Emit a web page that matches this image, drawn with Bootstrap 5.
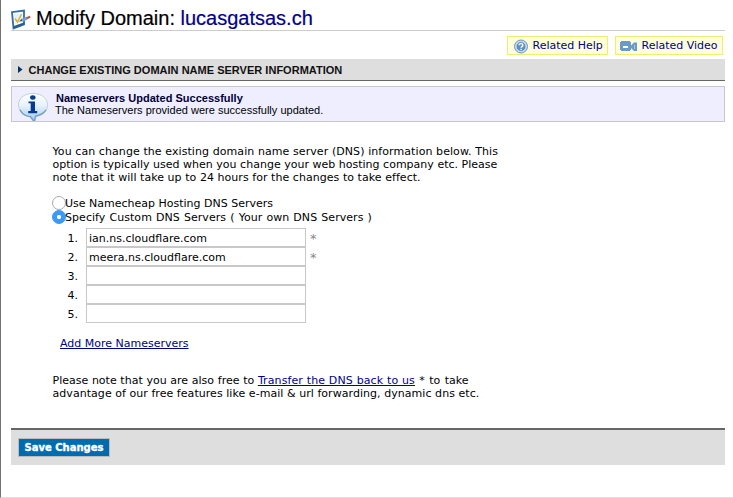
<!DOCTYPE html>
<html lang="en">
<head>
<meta charset="utf-8">
<meta name="viewport" content="width=device-width, initial-scale=1">
<title>Modify Domain</title>
<link href="https://cdn.jsdelivr.net/npm/bootstrap@5.3.0/dist/css/bootstrap.min.css" rel="stylesheet">
<style>
body{font-family:"DejaVu Sans",Verdana,sans-serif;font-size:11px;line-height:13px;color:#000;background:#fff}
.page{height:498px;border-left:1px solid #737373;border-bottom:1px solid #ddd;padding:0 8px 0 10px}
.arial{font-family:"Liberation Sans",Arial,sans-serif}
a{color:#00008b}
.title-bar{height:31px;border-bottom:1px solid #ccc;padding-top:6px}
.title-bar h1{font-size:20px;line-height:24px;-webkit-text-stroke:.2px}
.title-bar h1 span{color:#00008b}
.title-icon{margin:3px 5px 0 0}
.tools{height:28px;padding:5px 2px 0;gap:7px}
.tool{height:19px;border:1px solid #eeee70;background:#ffffdc;color:#00008b;white-space:nowrap}
.section-bar{height:22px;background:#dedede;border-bottom:1px solid #666}
.section-bar h2{font-size:11px;line-height:21px;padding-top:1px;color:#111;letter-spacing:.015px}
.notice{height:36px;margin-top:5px;border:1px solid #c8c8cc;background:#eeeeff;font-size:11px;line-height:12px}
.notice strong{color:#000033}
.content-area{padding:23px 0 0 41.500px;height:306px}
.option{height:14px;line-height:16px}
.option .form-check-input{width:14px;height:14px;min-height:0;margin:0 -1px 0 -.5px;border-color:#aaa;background-size:auto}
.option .form-check-input:checked{background-color:#3b99fc;border-color:#3b99fc;background-image:radial-gradient(circle,#fff 0 1.700px,transparent 2.500px)}
.ns-list{margin:4px 0 0 -.5px}
.ns-row{height:19px}
.ns-row .num{width:34px;padding-left:15.500px;line-height:21px}
.ns-row .form-control{width:220px;height:19px;min-height:0;padding:1px 2px 0;border:1px solid #c8c8c8;border-radius:0;font-size:11px;line-height:16px;color:#000}
.ns-row .req{color:#888;margin-left:4px;font-size:13px;line-height:21px}
.action-bar{height:37px;border-top:2px solid #666;background:#dedede;padding:8px 7px}
.save{height:19px;width:92px;padding:0;border:1px solid #bbb;border-radius:0;background:#006cb0;color:#fff;font-size:10px;line-height:16px;font-weight:700;-webkit-text-stroke:.35px #fff}
.ln{display:block;white-space:nowrap}
.sp-a{letter-spacing:.08px}
.sp-b{letter-spacing:.012px}
.sp-c{letter-spacing:.05px}
.sp-d{letter-spacing:.05px;word-spacing:.55px}
.sp-e{word-spacing:.2px}
.sp-e a{letter-spacing:.1px}
.sp-e .tail{word-spacing:.9px}
</style>
</head>
<body>
<main class="page">
  <header class="title-bar d-flex">
    <svg class="title-icon flex-shrink-0" width="20" height="21" viewBox="0 0 20 20" preserveAspectRatio="none"><path d="M1 3 13 1.500v13L2.500 18.500Z" fill="#fff" stroke="#326fa9" stroke-width="1.800"/><path d="M2.500 18.500 13.500 15V12.500l-11.500 4Z" fill="#2b5e94"/><path d="M3 5 11.500 4v8L4 14.500Z" fill="#e5f2fc"/><path d="m4 9 2.500 3.500L10.500 5" fill="none" stroke="#e6ac25" stroke-width="1.500"/><path d="m8 12 3-3 1 2.500Z" fill="#42536a"/><path d="m11 10.800 5-2.200" stroke="#72a6d8" stroke-width="2.800"/><path d="m15.500 8.800 3.700-1.500" stroke="#b35a50" stroke-width="2"/></svg>
    <h1 class="arial fw-normal mb-0 text-nowrap">Modify Domain: <span>lucasgatsas.ch</span></h1>
  </header>

  <nav class="tools d-flex justify-content-end">
    <a class="tool d-flex align-items-center text-decoration-none" href="#" style="width:101px;padding-left:4.500px"><svg class="me-1" width="16" height="16" viewBox="0 0 16 16"><circle cx="8" cy="8.500" r="6.500" fill="#c1d9f0" stroke="#7697ba"/><circle cx="8" cy="8.500" r="4.900" fill="#5d8fc4" stroke="#e2effa" stroke-width=".7"/><path d="M6.100 7.300c0-2.300 3.800-2.200 3.800 0 0 1.300-1.800 1.200-1.800 2.500M8.100 10.700v1.400" fill="none" stroke="#fff" stroke-width="1.400"/></svg><span>Related Help</span></a>
    <a class="tool d-flex align-items-center text-decoration-none" href="#" style="width:108px;padding-left:4px"><svg style="margin:1px 4.500px 0 0" width="17" height="11" viewBox="0 0 17 11"><path d="M0 1h1V0h9v1h1v8h-1v1H1V9H0Zm11 3.500 1-1 2-2h3v8.500h-3l-2-2-1-1Z" fill="#6b9ac8"/><path d="M3 5h5v2H3z" fill="#fff"/><path d="M14.500 4v4" stroke="#a8c6df"/></svg><span>Related Video</span></a>
  </nav>

  <div class="section-bar d-flex align-items-center">
    <svg width="5" height="7" viewBox="0 0 5 7" style="margin:0 5.500px 0 7px"><path d="M0 0 4.500 3.500 0 7Z" fill="#003366"/></svg>
    <h2 class="arial fw-bold mb-0 text-nowrap">CHANGE EXISTING DOMAIN NAME SERVER INFORMATION</h2>
  </div>

  <div class="notice arial d-flex" role="status">
    <svg class="flex-shrink-0" width="32" height="29" viewBox="0 0 32 30" preserveAspectRatio="none" style="margin:5px 6px 0 5px"><defs><linearGradient id="bubble" x2="0" y2="1"><stop stop-color="#fff"/><stop offset=".45" stop-color="#e6f2fb"/><stop offset="1" stop-color="#9fc8e8"/></linearGradient></defs><path d="M16 1.500C7.500 1.500 1.500 6.500 1.500 13c0 6.500 4.500 11.500 11 12.400L16 30h2l1-4.600c7-1 11.500-5.900 11.500-12.400 0-6.500-6-11.500-14.500-11.500Z" fill="url(#bubble)" stroke="#c3ced9"/><path d="M3 18.500c3 5.500 6 6.500 10.500 7l3 4h1l1-4.500c5-1 8-2.500 10.500-6.500" fill="none" stroke="#6e9fc6" stroke-width="1.300"/><ellipse cx="15.800" cy="5.600" rx="2.700" ry="2.300" fill="#073a91"/><path d="M11.500 9.700h6.500v10h2.200V22h-9v-2.300h2.500v-8h-2.200Z" fill="#073a91"/></svg>
    <div style="padding-top:5px"><strong class="ln" style="padding-left:1px;letter-spacing:.01px">Nameservers Updated Successfully</strong><span class="ln" style="letter-spacing:.01px">The Nameservers provided were successfully updated.</span></div>
  </div>

  <form class="content-area d-flex flex-column align-items-start">
    <p class="mb-0"><span class="ln sp-a">You can change the existing domain name server (DNS) information below. This</span><span class="ln sp-b">option is typically used when you change your web hosting company etc. Please</span><span class="ln sp-c">note that it will take up to 24 hours for the changes to take effect.</span></p>
    <div style="margin-top:12px">
      <label class="option d-flex text-nowrap"><input class="form-check-input flex-shrink-0" type="radio" name="dns"><span>Use Namecheap Hosting DNS Servers</span></label>
      <label class="option d-flex text-nowrap"><input class="form-check-input flex-shrink-0" type="radio" name="dns" checked><span class="sp-d">Specify Custom DNS Servers ( Your own DNS Servers )</span></label>
    </div>
    <div class="ns-list">
      <div class="ns-row d-flex"><span class="num">1.</span><input class="form-control" value="ian.ns.cloudflare.com" aria-label="Nameserver 1"><span class="req">*</span></div>
      <div class="ns-row d-flex"><span class="num">2.</span><input class="form-control" value="meera.ns.cloudflare.com" aria-label="Nameserver 2"><span class="req">*</span></div>
      <div class="ns-row d-flex"><span class="num">3.</span><input class="form-control" aria-label="Nameserver 3"></div>
      <div class="ns-row d-flex"><span class="num">4.</span><input class="form-control" aria-label="Nameserver 4"></div>
      <div class="ns-row d-flex"><span class="num">5.</span><input class="form-control" aria-label="Nameserver 5"></div>
    </div>
    <a href="#" style="margin:14px 0 0 7.500px">Add More Nameservers</a>
    <p class="mb-0" style="margin-top:24px"><span class="ln sp-e">Please note that you are also free to <a href="#">Transfer the DNS back to us</a><span class="tail"> * to take</span></span><span class="ln sp-c">advantage of our free features like e-mail &amp; url forwarding, dynamic dns etc.</span></p>
  </form>

  <footer class="action-bar"><button class="btn save d-block" type="button">Save Changes</button></footer>
</main>
<script src="https://cdn.jsdelivr.net/npm/bootstrap@5.3.0/dist/js/bootstrap.bundle.min.js"></script>
</body>
</html>
